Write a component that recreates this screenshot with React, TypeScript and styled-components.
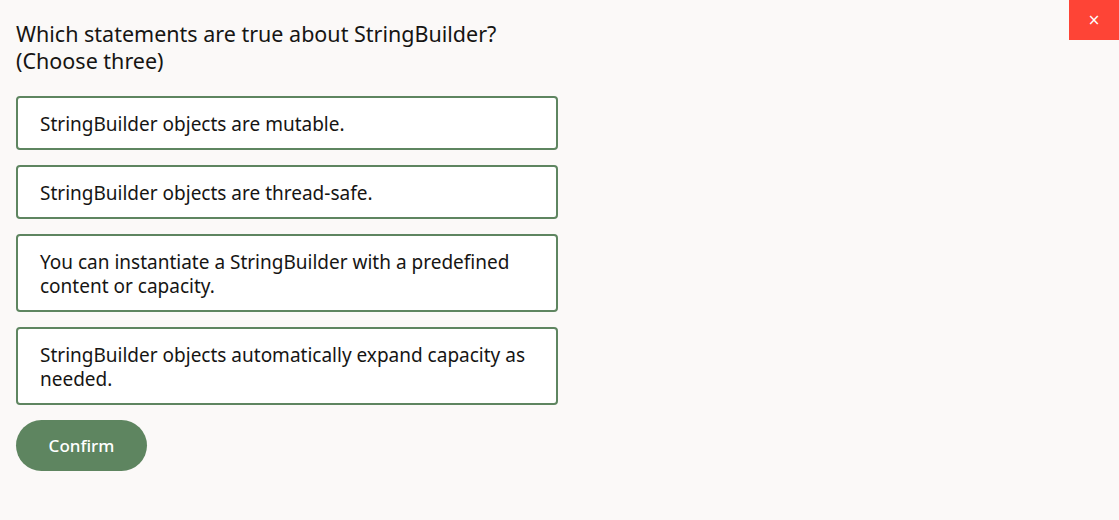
import React from "react";
import styled, { createGlobalStyle } from "styled-components";

const Global = createGlobalStyle`
  html, body { margin: 0; padding: 0; background: #fbf9f8; }
  body { font-family: "Noto Sans", "Open Sans", sans-serif; color: #161513; }
`;

const Page = styled.div`
  position: relative;
  width: 1119px;
  height: 520px;
  box-sizing: border-box;
  padding: 20px 16px 0 16px;
`;

const Question = styled.h1`
  margin: 0 0 22px 0;
  font-size: 21.5px;
  font-weight: 400;
  line-height: 27px;
`;

const Options = styled.div`
  display: flex;
  flex-direction: column;
  gap: 15px;
  width: 542px;
`;

const Option = styled.button`
  display: block;
  width: 100%;
  box-sizing: border-box;
  text-align: left;
  background: #ffffff;
  border: 2px solid #5e8560;
  border-radius: 4px;
  padding: 14px 22px 12px 22px;
  font-family: inherit;
  font-size: 19px;
  line-height: 24px;
  color: #161513;
  cursor: pointer;
`;

const Confirm = styled.button`
  margin-top: 15px;
  width: 131px;
  height: 51px;
  border: none;
  border-radius: 26px;
  background: #5e8560;
  color: #ffffff;
  font-family: inherit;
  font-size: 17px;
  font-weight: 500;
  cursor: pointer;
`;

const Close = styled.button`
  position: absolute;
  top: 0;
  right: 0;
  width: 50px;
  height: 40px;
  border: none;
  background: #fe4436;
  color: #ffffff;
  font-size: 15px;
  line-height: 1;
  padding: 0;
  cursor: pointer;
  font-family: "DejaVu Sans", sans-serif;
`;

const options = [
  "StringBuilder objects are mutable.",
  "StringBuilder objects are thread-safe.",
  "You can instantiate a StringBuilder with a predefined content or capacity.",
  "StringBuilder objects automatically expand capacity as needed.",
];

export default function App() {
  return (
    <>
      <Global />
      <Page>
        <Close aria-label="Close">×</Close>
        <Question>
          Which statements are true about StringBuilder?
          <br />
          (Choose three)
        </Question>
        <Options>
          {options.map((o) => (
            <Option key={o}>{o}</Option>
          ))}
        </Options>
        <Confirm>Confirm</Confirm>
      </Page>
    </>
  );
}
